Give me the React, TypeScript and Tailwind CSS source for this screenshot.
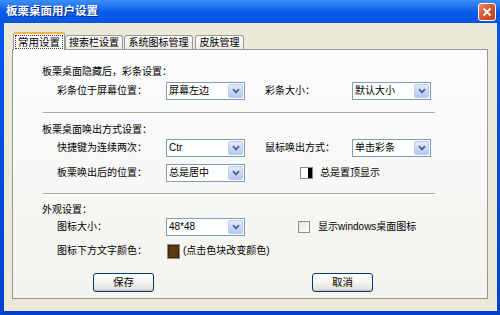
import type { ReactNode } from "react";

const font = "font-['Liberation_Sans','Noto_Sans_CJK_SC',sans-serif]";

function Chevron() {
  return (
    <svg width="8" height="6" viewBox="0 0 8 6">
      <path d="M1 1.2 L4 4.4 L7 1.2" fill="none" stroke="#4D6185" strokeWidth="1.7" />
    </svg>
  );
}

function Combo({ value }: { value: string }) {
  return (
    <div className="flex h-[18px] w-[79px] shrink-0 items-center border border-[#7F9DB9] bg-white pl-[2px]">
      <span className="flex-1 text-[10px] leading-none">{value}</span>
      <span className="m-px flex h-[14px] w-[15px] items-center justify-center rounded-[2px] border border-[#BACCF6] bg-gradient-to-b from-[#E3EBFE] to-[#B3C7F5]">
        <Chevron />
      </span>
    </div>
  );
}

function Tab({ label, active, className }: { label: string; active?: boolean; className?: string }) {
  if (active) {
    return (
      <div
        className={`relative z-10 -mb-px flex h-[18px] items-center justify-center rounded-t-[3px] border border-b-0 border-[#919B9C] border-t-2 border-t-[#F3B54A] bg-[#FCFCFE] ${className}`}
      >
        <span className="border border-dotted border-[#333] px-[2px] text-[10.5px] leading-[12px]">{label}</span>
      </div>
    );
  }
  return (
    <div
      className={`flex h-[14px] items-center justify-center rounded-t-[3px] border border-b-0 border-[#919B9C] bg-gradient-to-b from-white to-[#ECEBE5] text-[10px] leading-none ${className}`}
    >
      {label}
    </div>
  );
}

function Row({ children, className }: { children: ReactNode; className?: string }) {
  return <div className={`flex items-center pl-[15px] ${className}`}>{children}</div>;
}

function Label({ children, w }: { children: ReactNode; w: string }) {
  return <span className={`shrink-0 text-[10px] leading-none ${w}`}>{children}</span>;
}

function Btn({ label, className }: { label: string; className?: string }) {
  return (
    <div
      className={`flex h-[19px] w-[61px] items-center justify-center rounded-[3px] border border-[#003C74] bg-gradient-to-b from-white via-[#F4F4F0] to-[#DEDDD3] text-[10.5px] leading-none shadow-[inset_0_-1px_0_#C9C8BE] ${className}`}
    >
      {label}
    </div>
  );
}

function Sep({ className }: { className?: string }) {
  return <div className={`ml-px h-[2px] w-[392px] border-t border-b border-t-[#ACA899] border-b-white ${className}`} />;
}

export default function App() {
  return (
    <div className={`h-[315px] w-[500px] overflow-hidden bg-gradient-to-b from-[#0058EE] to-[#0042CE] text-black ${font}`}>
      {/* 标题栏 */}
      <div className="flex h-[23px] items-center justify-between bg-gradient-to-b from-[#3D8FF7] via-[#0A5DEA] to-[#0154E2] pl-[6px] pr-[4px]">
        <span className="text-[11.5px] font-bold leading-none text-white [text-shadow:1px_1px_0_#0A2A8A]">
          板栗桌面用户设置
        </span>
        <div className="flex h-[18px] w-[18px] items-center justify-center rounded-[3px] border border-white bg-gradient-to-br from-[#E9866A] via-[#D9532B] to-[#C2401C]">
          <svg width="10" height="10" viewBox="0 0 10 10">
            <path d="M1.5 1.5 L8.5 8.5 M8.5 1.5 L1.5 8.5" stroke="white" strokeWidth="1.8" />
          </svg>
        </div>
      </div>

      <div className="ml-[4px] mr-[3px] h-[288px] bg-[#ECE9D8] pl-[8px] pr-[9px] pt-[9px]">
        {/* 标签 */}
        <div className="flex h-[17px] items-end">
          <Tab label="常用设置" active className="ml-px w-[52px]" />
          <Tab label="搜索栏设置" className="w-[58px]" />
          <Tab label="系统图标管理" className="ml-px w-[69px]" />
          <Tab label="皮肤管理" className="ml-[2px] w-[49px]" />
        </div>

        {/* 面板 */}
        <div className="flex h-[250px] flex-col border border-[#919B9C] bg-gradient-to-b from-[#FCFCFE] to-[#F4F3EE] pl-[29px] pt-[15px]">
          <div className="h-[14px] text-[10px] leading-[14px]">板栗桌面隐藏后，彩条设置：</div>
          <Row className="mt-[3px]">
            <Label w="w-[109px]">彩条位于屏幕位置：</Label>
            <Combo value="屏幕左边" />
            <Label w="ml-[20px] w-[87px]">彩条大小：</Label>
            <Combo value="默认大小" />
          </Row>
          <Sep className="mt-[12px]" />

          <div className="mt-[9px] h-[14px] text-[10px] leading-[14px]">板栗桌面唤出方式设置：</div>
          <Row className="mt-[2px]">
            <Label w="w-[109px]">快捷键为连续两次：</Label>
            <Combo value="Ctr" />
            <Label w="ml-[20px] w-[87px]">鼠标唤出方式：</Label>
            <Combo value="单击彩条" />
          </Row>
          <Row className="mt-[7px]">
            <Label w="w-[109px]">板栗唤出后的位置：</Label>
            <Combo value="总是居中" />
            <span className="ml-[55px] flex h-[12px] w-[13px] shrink-0 border border-[#8A8A8A] bg-white">
              <span className="ml-auto h-full w-[4px] bg-black" />
            </span>
            <span className="ml-[7px] text-[10px] leading-none">总是置顶显示</span>
          </Row>
          <Sep className="mt-[11px]" />

          <div className="mt-[8px] h-[14px] text-[10px] leading-[14px]">外观设置：</div>
          <Row className="mt-px">
            <Label w="w-[109px]">图标大小：</Label>
            <Combo value="48*48" />
            <span className="ml-[53px] h-[12px] w-[12px] shrink-0 border border-[#8E8F8F] bg-gradient-to-br from-[#E4E3DD] to-white" />
            <span className="ml-[8px] text-[10px] leading-none">显示windows桌面图标</span>
          </Row>
          <Row className="mt-[7px] h-[16px]">
            <Label w="w-[110px]">图标下方文字颜色：</Label>
            <span className="h-[15px] w-[13px] shrink-0 border border-[#8E8E8E] bg-[#5A3A0E] shadow-[inset_0_0_0_1px_#3A2608]" />
            <span className="ml-[3px] text-[10px] leading-none">(点击色块改变颜色)</span>
          </Row>

          <div className="mt-[14px] flex">
            <Btn label="保存" className="ml-[51px]" />
            <Btn label="取消" className="ml-[158px]" />
          </div>
        </div>
      </div>
    </div>
  );
}
